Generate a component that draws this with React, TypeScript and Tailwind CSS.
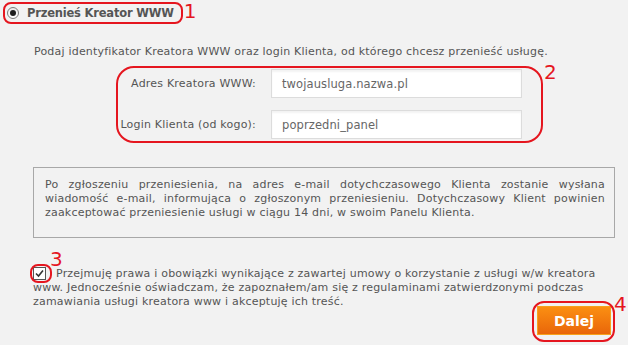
const RED = "border-[#e5161f]";

function Radio() {
  return (
    <span className="flex h-[12px] w-[12px] items-center justify-center rounded-full border border-[#7a7a7a] bg-gradient-to-b from-[#e9e9e9] to-[#ffffff]">
      <span className="h-[6px] w-[6px] rounded-full bg-[#1e1e1e]" />
    </span>
  );
}

function Field({ label, value }: { label: string; value: string }) {
  return (
    <div className="flex items-center">
      <label className="w-[138px] text-right text-[#555]">{label}</label>
      <div className="ml-[15px] flex h-[29px] w-[251px] items-center border border-[#dcdcdc] bg-white pl-[10px] text-[11.5px] tracking-[0.1px] text-[#666] shadow-[inset_0_2px_2px_rgba(0,0,0,0.05)]">
        {value}
      </div>
    </div>
  );
}

export default function App() {
  return (
    <div className="relative h-[345px] w-[628px] overflow-hidden bg-[#f2f2f2] font-['DejaVu_Sans',sans-serif] text-[11px] leading-[14px] tracking-[0.2px] text-[#555]">
      {/* naglowek */}
      <div className="flex items-start pl-[3px] pt-[2px]">
        <div className={`flex h-[22px] items-center gap-[8px] rounded-[8px] border-2 ${RED} pl-[2px] pr-[7px]`}>
          <Radio />
          <span className="text-[11.5px] font-bold tracking-[-0.2px] text-[#555]">Przenieś Kreator WWW</span>
        </div>
        <span className="-mt-[1px] ml-[1px] text-[20px] leading-[20px] tracking-normal text-[#e5161f]">1</span>
      </div>

      <p className="mt-[21px] pl-[34px]">
        Podaj identyfikator Kreatora WWW oraz login Klienta, od którego chcesz przenieść usługę.
      </p>

      <div className={`relative ml-[116px] mt-[7px] w-[427px] rounded-[18px] border-2 ${RED}`}>
        <div className="flex flex-col gap-[12px] pb-[2px] pt-[1px]">
          <Field label="Adres Kreatora WWW:" value="twojausluga.nazwa.pl" />
          <Field label="Login Klienta (od kogo):" value="poprzedni_panel" />
        </div>
        <span className="absolute left-[426px] top-[-6px] text-[20px] leading-[20px] tracking-normal text-[#e5161f]">2</span>
      </div>

      <div className="ml-[33px] mt-[24px] w-[582px] border border-[#a8a8a8] pb-[17px] pl-[11px] pr-[9px] pt-[10px]">
        <span className="block text-justify [text-align-last:justify]">
          Po zgłoszeniu przeniesienia, na adres e-mail dotychczasowego Klienta zostanie wysłana
        </span>
        <span className="block text-justify [text-align-last:justify]">
          wiadomość e-mail, informująca o zgłoszonym przeniesieniu. Dotychczasowy Klient powinien
        </span>
        <span className="block">zaakceptować przeniesienie usługi w ciągu 14 dni, w swoim Panelu Klienta.</span>
      </div>

      <div className="relative ml-[33px] mt-[29px] h-[42px] w-[582px]">
        <span className="relative mr-[10px] inline-flex h-[13px] w-[13px] items-center justify-center border border-[#555] bg-white align-[-2px]">
          <svg width="11" height="11" viewBox="0 0 11 11">
            <polyline points="2,5.5 4.5,8 9,2.5" fill="none" stroke="#333" strokeWidth="1.6" />
          </svg>
          <span className={`absolute left-[-4px] top-[-4px] h-[19px] w-[22px] rounded-[8px] border-2 ${RED}`} />
        </span>
        Przejmuję prawa i obowiązki wynikające z zawartej umowy o korzystanie z usługi w/w kreatora www.
        Jednocześnie oświadczam, że zapoznałem/am się z regulaminami zatwierdzonymi podczas zamawiania usługi
        kreatora www i akceptuję ich treść.
        <span className="absolute left-[17px] top-[-18px] text-[20px] leading-[20px] tracking-normal text-[#e5161f]">3</span>
      </div>

      <div className="-mt-[3px] flex justify-end pr-[17px]">
        <div className="relative">
          <button className="flex h-[29px] w-[74px] items-center justify-center border border-[#f7a21b] bg-gradient-to-b from-[#fb8f12] to-[#e9660a] text-[14px] font-bold tracking-normal text-white">
            Dalej
          </button>
          <span className={`absolute left-[-5px] top-[-5px] h-[41px] w-[83px] rounded-[12px] border-2 ${RED}`} />
          <span className="absolute left-[77px] top-[-12px] text-[20px] leading-[20px] tracking-normal text-[#e5161f]">4</span>
        </div>
      </div>
    </div>
  );
}
